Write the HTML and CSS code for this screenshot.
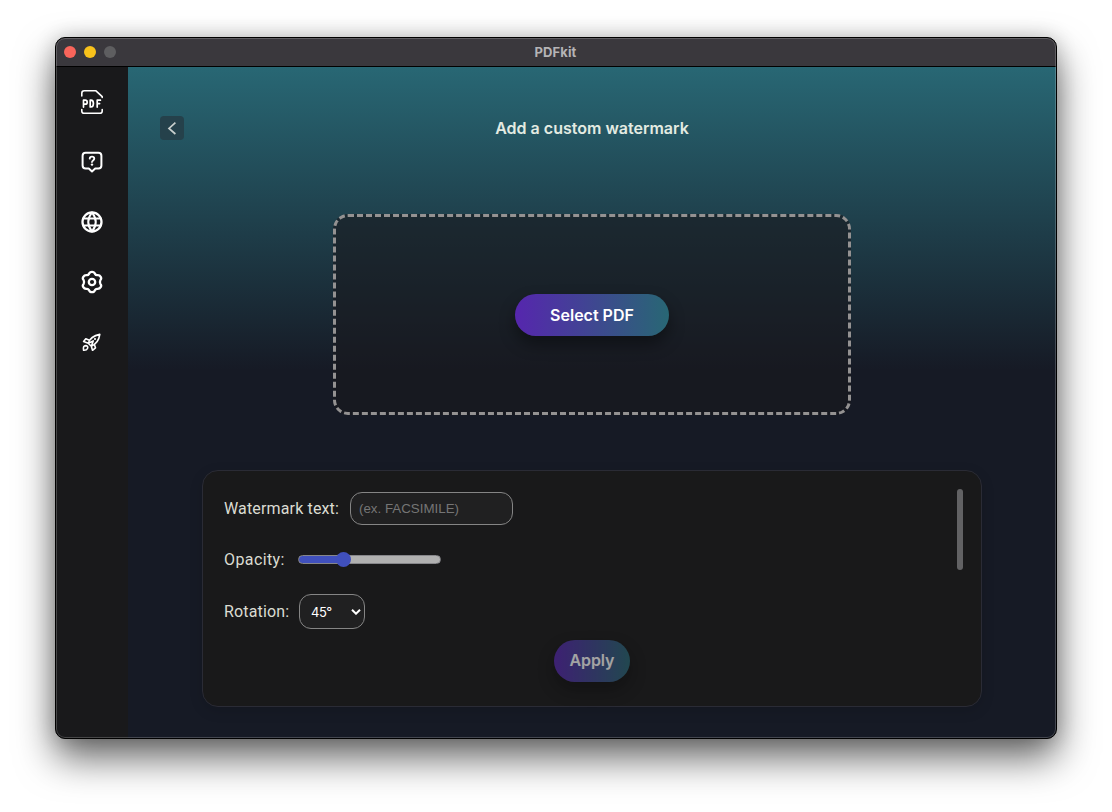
FILE: index.html
```html
<!DOCTYPE html>
<html lang="en">
<head>
<meta charset="utf-8">
<title>PDFkit</title>
<link rel="stylesheet" href="styles.css">
</head>
<body>
<div class="window">
  <header class="titlebar">
    <div class="lights"><i class="light red"></i><i class="light yellow"></i><i class="light grey"></i></div>
    <span class="window-title">PDFkit</span>
  </header>
  <div class="content">
    <nav class="sidebar">
      <svg class="icon" viewBox="0 0 24 24"><path d="M1.8 6V3.2Q1.8.8 4.2.8H16L22.2 6.6V7.5M1.8 19.5V21.2Q1.8 23.4 4.2 23.4H19.8Q22.2 23.4 22.2 21.2V19.5" stroke-width="1.6"/><path d="M3.5 17.1V10.2H5.2A2 2 0 0 1 5.2 14.2H3.5M10.2 10.2V17H11Q13.4 17 13.4 13.6T11 10.2ZM17.2 17.1V10.2H20.4M17.2 13.6H19.6" stroke-width="1.7"/></svg>
      <svg class="icon" viewBox="0 0 24 24"><path d="M5.6 2.8H18.4Q21.4 2.8 21.4 5.8V15.6Q21.4 18.6 18.4 18.6H15.2L12 21.4 8.8 18.6H5.6Q2.6 18.6 2.6 15.6V5.8Q2.6 2.8 5.6 2.8Z" stroke-width="2"/><path d="M9.7 8.6Q9.8 6.7 12 6.7T14.3 8.6Q14.3 9.7 13.1 10.5T12 12" stroke-width="1.8"/><circle class="solid" cx="12" cy="14.6" r="1.2"/></svg>
      <svg class="icon" viewBox="0 0 24 24"><circle cx="12" cy="12" r="9.5"/><path d="M12 2.5Q4.5 12 12 21.5M12 2.5Q19.5 12 12 21.5" stroke-width="2"/><path d="M3.2 8.4H20.8M3.2 15.6H20.8" stroke-width="2"/></svg>
      <svg class="icon" viewBox="0 0 24 24"><path d="M9 3.9Q9.8 1.8 12 1.8T15 3.9Q15.8 5.4 17.5 5.1Q19.6 4.9 20.7 6.8T20.4 10Q19.4 12 20.4 14Q21.8 15.4 20.7 17.2T17.5 18.9Q15.8 18.6 15 20.1Q14.2 22.2 12 22.2T9 20.1Q8.2 18.6 6.5 18.9Q4.4 19.1 3.3 17.2T3.6 14Q4.6 12 3.6 10Q2.2 8.6 3.3 6.8T6.5 5.1Q8.2 5.4 9 3.9Z" stroke-width="2.3"/><circle cx="12" cy="12" r="3.2" stroke-width="2.3"/></svg>
      <svg class="icon" viewBox="0 0 24 24"><path d="M8.2 13.2Q10.5 6.2 19.8 4.4Q18.6 13.1 11.3 16.2ZM9.3 10.3L5.8 8.7 3.6 11.6 8.2 13.2 13.2 10.9M11.3 16.2L12.5 20.3 15.5 17.8 14.2 14.2M11.3 16.2L13.2 10.9M3.6 20.3Q2.7 15.5 5.9 15.6Q8.5 16.2 7.5 18.5Q6.6 20.5 3.6 20.3Z" stroke-width="1.6"/><circle class="solid" cx="15" cy="9" r="1.1"/></svg>
    </nav>
    <main class="main">
      <div class="heading">
        <button class="back" aria-label="Back"><svg viewBox="0 0 24 24"><path d="M15.4 6.7L9 12.4 15.4 18"/></svg></button>
        <h1 class="title">Add a custom watermark</h1>
      </div>
      <section class="dropzone"><button class="pill select-pdf">Select PDF</button></section>
      <section class="panel">
        <div class="fields">
          <div class="row"><label class="label label-text">Watermark text:</label><input class="text-input" placeholder="(ex. FACSIMILE)"></div>
          <div class="row"><label class="label label-opacity">Opacity:</label><input class="slider" type="range" min="0" max="100" value="30"></div>
          <div class="row"><label class="label label-rotation">Rotation:</label><div class="select"><span>45°</span><svg class="chevron" viewBox="0 0 10 6"><path d="M1 .8L5 4.7 9 .8"/></svg></div></div>
          <div class="scroll-thumb"></div>
        </div>
        <button class="pill apply">Apply</button>
      </section>
    </main>
  </div>
</div>
</body>
</html>
```
FILE: styles.css
```css
* { box-sizing: border-box; }
body { margin: 0; height: 812px; padding: 37px 55px; background: #fff; overflow: hidden; font-family: Roboto, sans-serif; }
button { border: 0; font: inherit; padding: 0; }
.window { position: relative; width: 1002px; height: 702px; border: 1px solid #000; border-radius: 10px; overflow: hidden; background: #19191a; box-shadow: 0 19px 38px rgba(0,0,0,.6), 0 0 20px rgba(0,0,0,.18); }
.window::after { content: ""; position: absolute; inset: 0; border: 1px solid rgba(255,255,255,.2); border-radius: 9px; pointer-events: none; }
.titlebar { height: 29px; background: #3a383d; border-bottom: 1px solid #000; display: grid; grid-template-columns: 1fr auto 1fr; align-items: center; }
.lights { display: flex; gap: 8px; padding-left: 8px; }
.light { width: 12px; height: 12px; border-radius: 50%; }
.red { background: #f9655b; }
.yellow { background: #f8c21b; }
.grey { background: #5e5e60; }
.window-title { padding: 0 1px 1px 0; font: bold 13px/16px Inter, sans-serif; letter-spacing: .1px; color: #b5b4b6; }
.content { display: flex; height: 671px; }
.sidebar { width: 72px; padding-top: 23px; display: flex; flex-direction: column; align-items: center; gap: 36px; background: #19191b; }
.icon { width: 24px; height: 24px; flex: none; fill: none; stroke: #fff; stroke-width: 2.3; stroke-linecap: round; stroke-linejoin: round; }
.icon .solid { fill: #fff; stroke: none; }
.main { width: 928px; display: flex; flex-direction: column; align-items: center; background: linear-gradient(#286774 0, #161a25 303px); }
.heading { width: 864px; height: 24px; margin-top: 49px; display: grid; grid-template-columns: 24px 1fr 24px; align-items: center; }
.back { width: 24px; height: 24px; border-radius: 4px; background: #25414b; }
.back svg { display: block; fill: none; stroke: #c9cfcd; stroke-width: 1.7; }
.title { margin: 0; text-align: center; font: 600 16px/24px Inter, sans-serif; color: #e3ebe2; }
.dropzone { width: 518px; height: 201px; margin-top: 74px; border: 3px dashed #949292; border-radius: 15px; background: rgba(25,25,30,.6); display: flex; align-items: center; justify-content: center; }
.pill { height: 42px; border-radius: 21px; background: linear-gradient(90deg, #5626ae, #286774); color: #fff; font: 600 16px/20px Inter, sans-serif; box-shadow: 0 8px 16px rgba(0,0,0,.4); }
.select-pdf { width: 154px; }
.panel { width: 780px; height: 237px; margin-top: 55px; padding: 18px 18px 0 21px; border: 1px solid #2a2b35; border-radius: 16px; background: #19191a; box-shadow: 0 4px 14px rgba(0,0,0,.12); display: flex; flex-direction: column; align-items: center; }
.fields { position: relative; width: 100%; height: 151px; padding-top: 3px; }
.row { display: flex; align-items: center; height: 33px; margin-bottom: 18px; }
.row:nth-child(3) { height: 35px; }
.label { font-size: 16px; line-height: 20px; color: #dbdcd2; white-space: nowrap; letter-spacing: .15px; }
.label-text { width: 126px; }
.label-opacity { width: 74px; letter-spacing: .4px; }
.label-rotation { width: 75px; }
.text-input { width: 163px; height: 33px; padding: 0 8px; border: 1px solid #858585; border-radius: 12px; background: #202021; font: 13.33px "Liberation Sans", sans-serif; color: #fff; }
.text-input::placeholder { color: #757575; }
.slider { appearance: none; width: 143px; height: 16px; margin: 0; background: none; }
.slider::-webkit-slider-runnable-track { height: 9px; border-radius: 5px; border: 1px solid #86868a; background: linear-gradient(90deg, #4050bd 32%, #b0b0b0 32%); }
.slider::-webkit-slider-thumb { appearance: none; width: 15px; height: 15px; margin: -4px 0 0 -1px; border-radius: 50%; background: #4050bd; }
.select { width: 66px; height: 35px; border: 1px solid #858585; border-radius: 12px; background: #202021; color: #fff; display: flex; align-items: center; justify-content: space-between; padding: 0 3px 0 11px; font: 13px Inter, sans-serif; letter-spacing: -.5px; }
.chevron { width: 10px; height: 6px; fill: none; stroke: #fff; stroke-width: 2; }
.scroll-thumb { position: absolute; right: 0; top: 0; width: 6px; height: 81px; border-radius: 3px; background: #626264; }
.apply { width: 76px; margin-right: 3px; padding-bottom: 2px; letter-spacing: -.1px; opacity: .6; }
```
